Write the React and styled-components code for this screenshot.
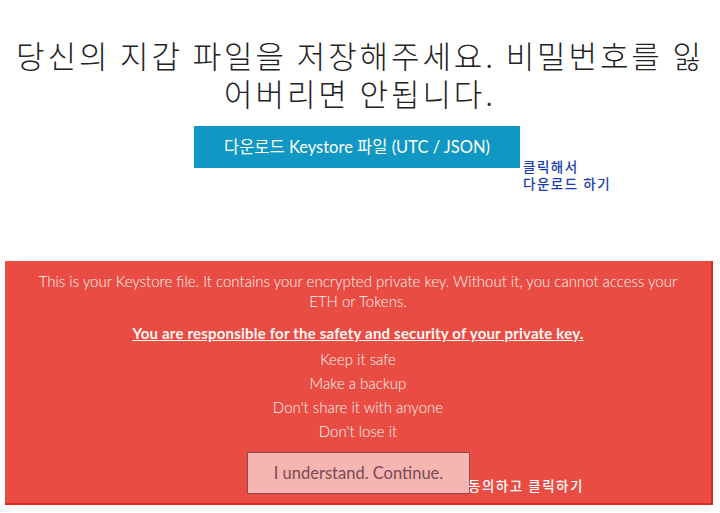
import React from "react";
import styled, { createGlobalStyle } from "styled-components";

const GlobalStyle = createGlobalStyle`
  body {
    margin: 0;
    background: #fff;
    font-family: Lato, "Noto Sans CJK KR", sans-serif;
  }
`;

export default function App() {
  return (
    <Page>
      <GlobalStyle />
      <Title>당신의 지갑 파일을 저장해주세요. 비밀번호를 잃어버리면 안됩니다.</Title>
      <DownloadRow>
        <DownloadButton>다운로드 Keystore 파일 (UTC / JSON)</DownloadButton>
        <Note $color="#1a3cb0" $top="32px" $left="329px">
          클릭해서
          <br />
          다운로드 하기
        </Note>
      </DownloadRow>
      <Warning>
        <Lead>
          This is your Keystore file. It contains your encrypted private key. Without it, you cannot access your ETH or Tokens.
        </Lead>
        <Strong>You are responsible for the safety and security of your private key.</Strong>
        <Tips>
          <li>Keep it safe</li>
          <li>Make a backup</li>
          <li>Don't share it with anyone</li>
          <li>Don't lose it</li>
        </Tips>
        <ContinueRow>
          <ContinueButton>I understand. Continue.</ContinueButton>
          <Note $color="#fff" $top="25px" $left="221px">동의하고 클릭하기</Note>
        </ContinueRow>
      </Warning>
    </Page>
  );
}

const Page = styled.div`
  width: 720px;
  height: 513px;
  overflow: hidden;
  padding-top: 36px;
  box-sizing: border-box;
`;

const Title = styled.h1`
  margin: 0 auto;
  width: 710px;
  font-family: "Noto Sans CJK KR", sans-serif;
  font-weight: 300;
  font-size: 31px;
  line-height: 38px;
  color: #222;
  text-align: center;
  letter-spacing: 2.9px;
`;

const DownloadRow = styled.div`
  position: relative;
  width: 326px;
  margin: 14px 0 0 194px;
`;

const DownloadButton = styled.button`
  display: block;
  width: 326px;
  height: 42px;
  border: 0;
  background: #1097c3;
  color: #fff;
  font-family: Lato, "Noto Sans CJK KR", sans-serif;
  font-size: 16.5px;
  padding: 0 0 2px;
`;

const Note = styled.div`
  position: absolute;
  top: ${(p) => p.$top};
  left: ${(p) => p.$left};
  white-space: nowrap;
  color: ${(p) => p.$color};
  font-family: "Noto Sans CJK KR", sans-serif;
  font-size: 13.5px;
  line-height: 17px;
  font-weight: 500;
  letter-spacing: 1.5px;
`;

const Warning = styled.div`
  margin: 93px 0 0 5px;
  width: 708px;
  height: 244px;
  box-sizing: border-box;
  background: #e84c43;
  border-right: 2px solid #e0271d;
  border-bottom: 2px solid #e0271d;
  color: #fff8f4;
  font-family: Lato, sans-serif;
  font-size: 15px;
  text-align: center;
  padding: 10px 30px 0;
`;

const Lead = styled.p`
  margin: 0;
  line-height: 20px;
  font-weight: 300;
`;

const Strong = styled.p`
  margin: 12px 0 0;
  font-weight: 700;
  text-decoration: underline;
  line-height: 20px;
  letter-spacing: 0.2px;
`;

const Tips = styled.ul`
  list-style: none;
  margin: 4px 0 0;
  padding: 0;
  li {
    line-height: 24px;
    font-weight: 300;
  }
`;

const ContinueRow = styled.div`
  position: relative;
  width: 223px;
  margin: 9px 0 0 212px;
`;

const ContinueButton = styled.button`
  display: block;
  width: 223px;
  height: 42px;
  background: #f5b5b0;
  border: 1px solid #8a4a50;
  color: #7a4a55;
  font-family: Lato, sans-serif;
  font-size: 16.5px;
  padding: 0;
`;
